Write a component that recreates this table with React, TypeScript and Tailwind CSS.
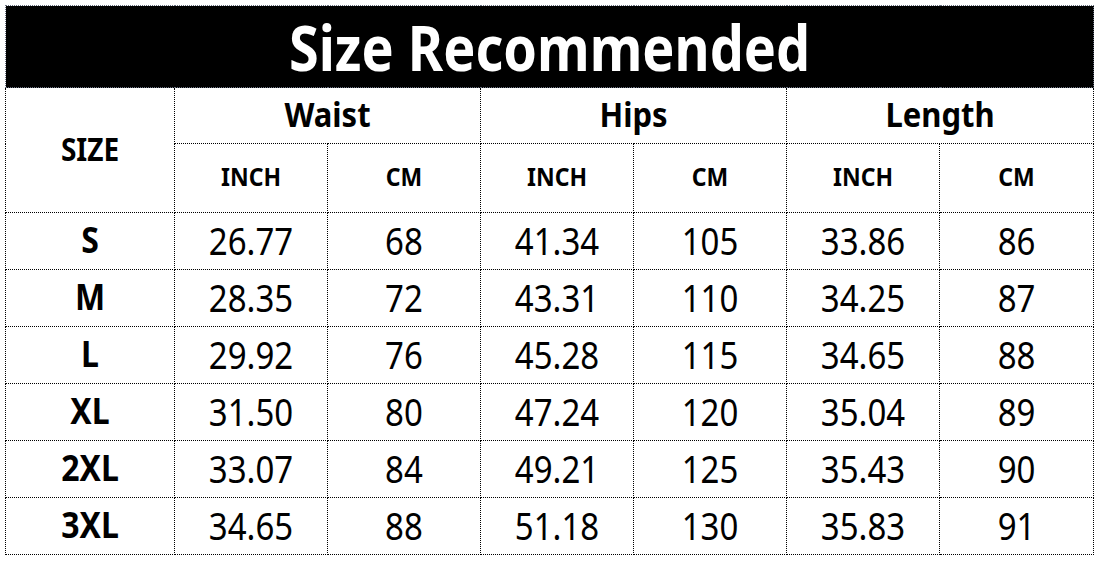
const rows = [
  ["S", "26.77", "68", "41.34", "105", "33.86", "86"],
  ["M", "28.35", "72", "43.31", "110", "34.25", "87"],
  ["L", "29.92", "76", "45.28", "115", "34.65", "88"],
  ["XL", "31.50", "80", "47.24", "120", "35.04", "89"],
  ["2XL", "33.07", "84", "49.21", "125", "35.43", "90"],
  ["3XL", "34.65", "88", "51.18", "130", "35.83", "91"],
];

const cell = "border border-dotted border-black text-center align-middle p-0";

export default function App() {
  return (
    <div className="w-[1105px] h-[563px] bg-white pt-[5px] pl-[5px] text-black font-['Noto_Sans',sans-serif]">
      <table className="table-fixed border-collapse w-[1088px]">
        <colgroup>
          <col className="w-[169px]" />
          <col className="w-[153px]" />
          <col className="w-[153px]" />
          <col className="w-[153px]" />
          <col className="w-[153px]" />
          <col className="w-[153px]" />
          <col className="w-[154px]" />
        </colgroup>
        <tbody>
          <tr className="h-[82px]">
            <td colSpan={7} className="bg-black border border-dotted border-gray-500 text-center align-middle p-0">
              <span className="inline-block scale-y-[1.15] text-white font-bold text-[54px] leading-none">
                Size Recommended
              </span>
            </td>
          </tr>
          <tr className="h-[56px]">
            <td rowSpan={2} className={cell}>
              <span className="inline-block scale-y-[1.12] font-bold text-[28px] leading-none">SIZE</span>
            </td>
            {["Waist", "Hips", "Length"].map((g) => (
              <td key={g} colSpan={2} className={cell}>
                <span className="inline-block scale-y-[1.1] font-bold text-[31px] leading-none">{g}</span>
              </td>
            ))}
          </tr>
          <tr className="h-[69px]">
            {["INCH", "CM", "INCH", "CM", "INCH", "CM"].map((u, i) => (
              <td key={i} className={cell}>
                <span className="inline-block scale-y-[1.12] font-bold text-[23px] leading-none">{u}</span>
              </td>
            ))}
          </tr>
          {rows.map((r) => (
            <tr key={r[0]} className="h-[57px]">
              {r.map((v, i) => (
                <td key={i} className={cell}>
                  <span
                    className={
                      i === 0
                        ? "inline-block scale-y-[1.12] font-bold text-[32px] leading-none"
                        : "inline-block scale-y-[1.15] text-[33px] leading-none"
                    }
                  >
                    {v}
                  </span>
                </td>
              ))}
            </tr>
          ))}
        </tbody>
      </table>
    </div>
  );
}
